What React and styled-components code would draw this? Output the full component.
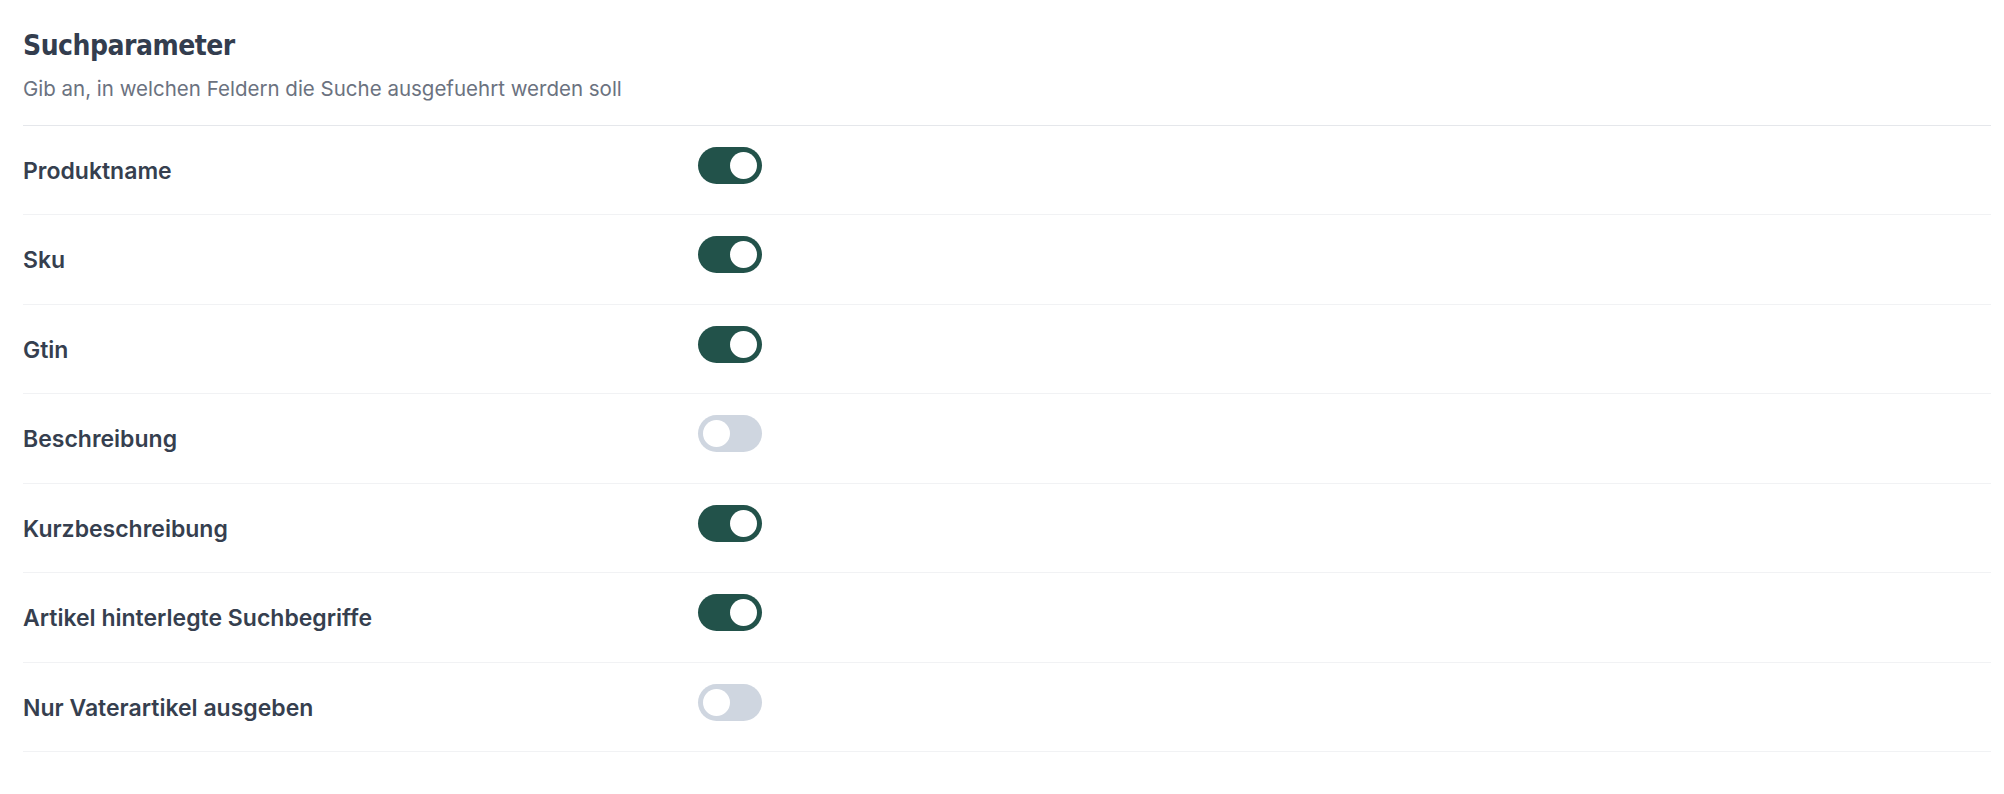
import React, { useState } from "react";
import styled, { createGlobalStyle } from "styled-components";

const GlobalStyle = createGlobalStyle`
  body {
    margin: 0;
    background: #ffffff;
    font-family: Inter, "Noto Sans", sans-serif;
  }
`;

const Section = styled.section`
  padding: 28px 13px 0 23px;
`;

const Header = styled.header`
  padding-bottom: 23.5px;
  border-bottom: 1px solid #e5e7eb;
`;

const Title = styled.h2`
  margin: 0;
  font-family: "DejaVu Sans Condensed", "Liberation Sans Narrow", sans-serif;
  font-stretch: condensed;
  font-weight: 700;
  font-size: 28px;
  letter-spacing: -0.5px;
  line-height: 36px;
  color: #333d4e;
`;

const Subtitle = styled.p`
  margin: 12px 0 0;
  font-size: 20.5px;
  line-height: 25px;
  color: #6b7280;
`;

const Row = styled.div`
  display: flex;
  align-items: flex-start;
  padding: 21px 0 29.5px;
  border-bottom: 1px solid #f1f2f4;
`;

const Label = styled.span`
  width: 675px;
  margin-top: 10px;
  font-size: 23px;
  line-height: 28px;
  font-weight: 600;
  color: #363f4f;
`;

const Switch = styled.button`
  position: relative;
  width: 64px;
  height: 37px;
  padding: 0;
  border: none;
  border-radius: 999px;
  cursor: pointer;
  background: ${(p) => (p.$on ? "#22524a" : "#cfd6e0")};

  &::after {
    content: "";
    position: absolute;
    top: 5px;
    left: ${(p) => (p.$on ? "32px" : "5px")};
    width: 27px;
    height: 27px;
    border-radius: 50%;
    background: #ffffff;
    transition: left 0.15s ease;
  }
`;

const initial = [
  { label: "Produktname", on: true },
  { label: "Sku", on: true },
  { label: "Gtin", on: true },
  { label: "Beschreibung", on: false },
  { label: "Kurzbeschreibung", on: true },
  { label: "Artikel hinterlegte Suchbegriffe", on: true },
  { label: "Nur Vaterartikel ausgeben", on: false },
];

export default function App() {
  const [items, setItems] = useState(initial);

  const toggle = (i) =>
    setItems((prev) =>
      prev.map((it, idx) => (idx === i ? { ...it, on: !it.on } : it))
    );

  return (
    <>
      <GlobalStyle />
      <Section>
        <Header>
          <Title>Suchparameter</Title>
          <Subtitle>Gib an, in welchen Feldern die Suche ausgefuehrt werden soll</Subtitle>
        </Header>
        {items.map((it, i) => (
          <Row key={it.label}>
            <Label>{it.label}</Label>
            <Switch
              type="button"
              role="switch"
              aria-checked={it.on}
              $on={it.on}
              onClick={() => toggle(i)}
            />
          </Row>
        ))}
      </Section>
    </>
  );
}
